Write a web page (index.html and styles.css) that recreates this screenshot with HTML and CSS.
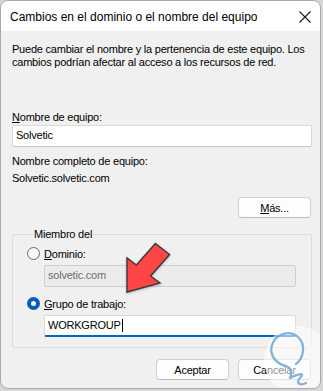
FILE: index.html
```html
<!DOCTYPE html>
<html lang="es">

<head>
    <meta charset="UTF-8">
    <title>Cambios en el dominio o el nombre del equipo</title>
    <link rel="stylesheet" href="styles.css">
</head>

<body>

    <div class="window">
        <div class="titlebar">
            <span class="title">Cambios en el dominio o el nombre del equipo</span>
            <svg class="close" width="12" height="12" viewBox="0 0 12 12">
                <path d="M0.5 0.5 L11.5 11.5 M11.5 0.5 L0.5 11.5" stroke="#1a1a1a" stroke-width="1.1" fill="none"/>
            </svg>
        </div>

        <div class="content">
            <p class="intro">Puede cambiar el nombre y la pertenencia de este equipo. Los<br>cambios podrían afectar al acceso a los recursos de red.</p>

            <div class="field-label"><u>N</u>ombre de equipo:</div>
            <div class="textbox">Solvetic</div>

            <div class="info">Nombre completo de equipo:</div>
            <div class="info">Solvetic.solvetic.com</div>

            <div class="more-row">
                <button class="btn more"><u>M</u>ás...</button>
            </div>

            <fieldset class="group">
                <legend>Miembro del</legend>
                <div class="radio-row">
                    <span class="radio"></span>
                    <span><u>D</u>ominio:</span>
                </div>
                <div class="textbox disabled">solvetic.com</div>
                <div class="radio-row second">
                    <span class="radio checked"></span>
                    <span><u>G</u>rupo de trabajo:</span>
                </div>
                <div class="textbox active">WORKGROUP<span class="caret"></span></div>
            </fieldset>

            <div class="actions">
                <button class="btn">Aceptar</button>
                <button class="btn">Cancelar</button>
            </div>
        </div>

        <!-- flecha roja -->
        <svg class="arrow" width="60" height="60" viewBox="120 238 60 60">
            <polygon points="127,292 127,258 136.4,265 155.4,243.5 169.6,254.5 150.6,276 160,283"
                fill="#ff4646" stroke="#3a3a3a" stroke-width="1.4" stroke-linejoin="miter"/>
        </svg>

        <!-- marca de agua -->
        <svg class="watermark" width="70" height="70" viewBox="260 325 70 70">
            <circle cx="298" cy="360" r="34" fill="#ffffff" fill-opacity="0.55"/>
            <path d="M296 364 C304 358 306 344 298 337 C290 330 276 333 272 345 C269 355 276 364 286 366 C292 368 292 374 290 378 C298 374 306 372 300 378 C295 383 300 386 306 383"
                fill="none" stroke="#6fa7d6" stroke-width="2.3" stroke-linecap="round" stroke-linejoin="round" stroke-opacity="0.85"/>
        </svg>
    </div>

</body>

</html>
```

FILE: styles.css
```css
body {
    margin: 0;
    background-color: #d6d6d6;
    font-family: 'Liberation Sans', Arial, sans-serif;
    font-size: 11px;
    letter-spacing: -0.22px;
    color: #000;
}

.window {
    position: relative;
    width: 321px;
    height: 389px;
    box-sizing: border-box;
    background-color: #f0f0f0;
    border: 1px solid #a9a9a9;
    border-radius: 8px;
    overflow: hidden;
}

.titlebar {
    height: 30px;
    background-color: #fff;
    display: flex;
    align-items: center;
    justify-content: space-between;
    padding: 0 9px 0 9px;
}

.title {
    font-size: 12px;
    letter-spacing: 0;
    padding-top: 2px;
}

.close {
    margin-top: 2px;
}

.content {
    padding: 0 8px 0 11px;
}

.intro {
    margin: 12px 0 0 0;
    line-height: 13px;
    white-space: nowrap;
}

.field-label {
    margin-top: 42px;
    line-height: 13px;
}

.textbox {
    box-sizing: border-box;
    height: 22px;
    margin-top: 1px;
    padding: 1px 3px;
    line-height: 17px;
    background-color: #fff;
    border: 1px solid #dadada;
    border-bottom-color: #c4c4c4;
    border-radius: 2px;
}

.info {
    line-height: 17px;
}

.textbox + .info {
    margin-top: 6px;
}

.more-row {
    display: flex;
    justify-content: flex-end;
    margin-top: 10px;
}

.btn {
    box-sizing: border-box;
    width: 73px;
    height: 21px;
    padding: 0;
    font-family: inherit;
    font-size: 11px;
    letter-spacing: -0.22px;
    color: #000;
    background-color: #fdfdfd;
    border: 1px solid #d0d0d0;
    border-bottom-color: #bdbdbd;
    border-radius: 4px;
}

.more {
    margin-right: 1px;
}

.group {
    margin: 10px 0 0 0;
    padding: 5px 15px 10px 14px;
    border: 1px solid #dcdcdc;
    border-radius: 2px;
}

.group legend {
    padding: 0 2px;
    margin-left: 5px;
    line-height: 13px;
}

.radio-row {
    display: flex;
    align-items: center;
    gap: 4px;
    height: 15px;
}

.radio-row.second {
    margin-top: 9px;
}

.radio {
    box-sizing: border-box;
    width: 13px;
    height: 13px;
    border: 1px solid #6a6a6a;
    border-radius: 50%;
    background-color: #f7f7f7;
}

.radio.checked {
    border: 4px solid #005fb8;
    background-color: #fff;
}

.group .textbox {
    margin-left: 17px;
    margin-top: 4px;
}

.textbox.disabled {
    background-color: #ececec;
    border-color: #cfcfcf;
    color: #6d6d6d;
}

.textbox.active {
    border-bottom: 2px solid #0067c0;
    display: flex;
    align-items: center;
}

.caret {
    display: inline-block;
    width: 1px;
    height: 13px;
    margin-left: 1px;
    background-color: #000;
}

.actions {
    display: flex;
    justify-content: flex-end;
    gap: 9px;
    margin-top: 11px;
    padding-right: 1px;
}

.arrow {
    position: absolute;
    left: 119px;
    top: 237px;
    filter: drop-shadow(0 1px 1px rgba(0, 0, 0, 0.25));
}

.watermark {
    position: absolute;
    left: 259px;
    top: 324px;
}
```
